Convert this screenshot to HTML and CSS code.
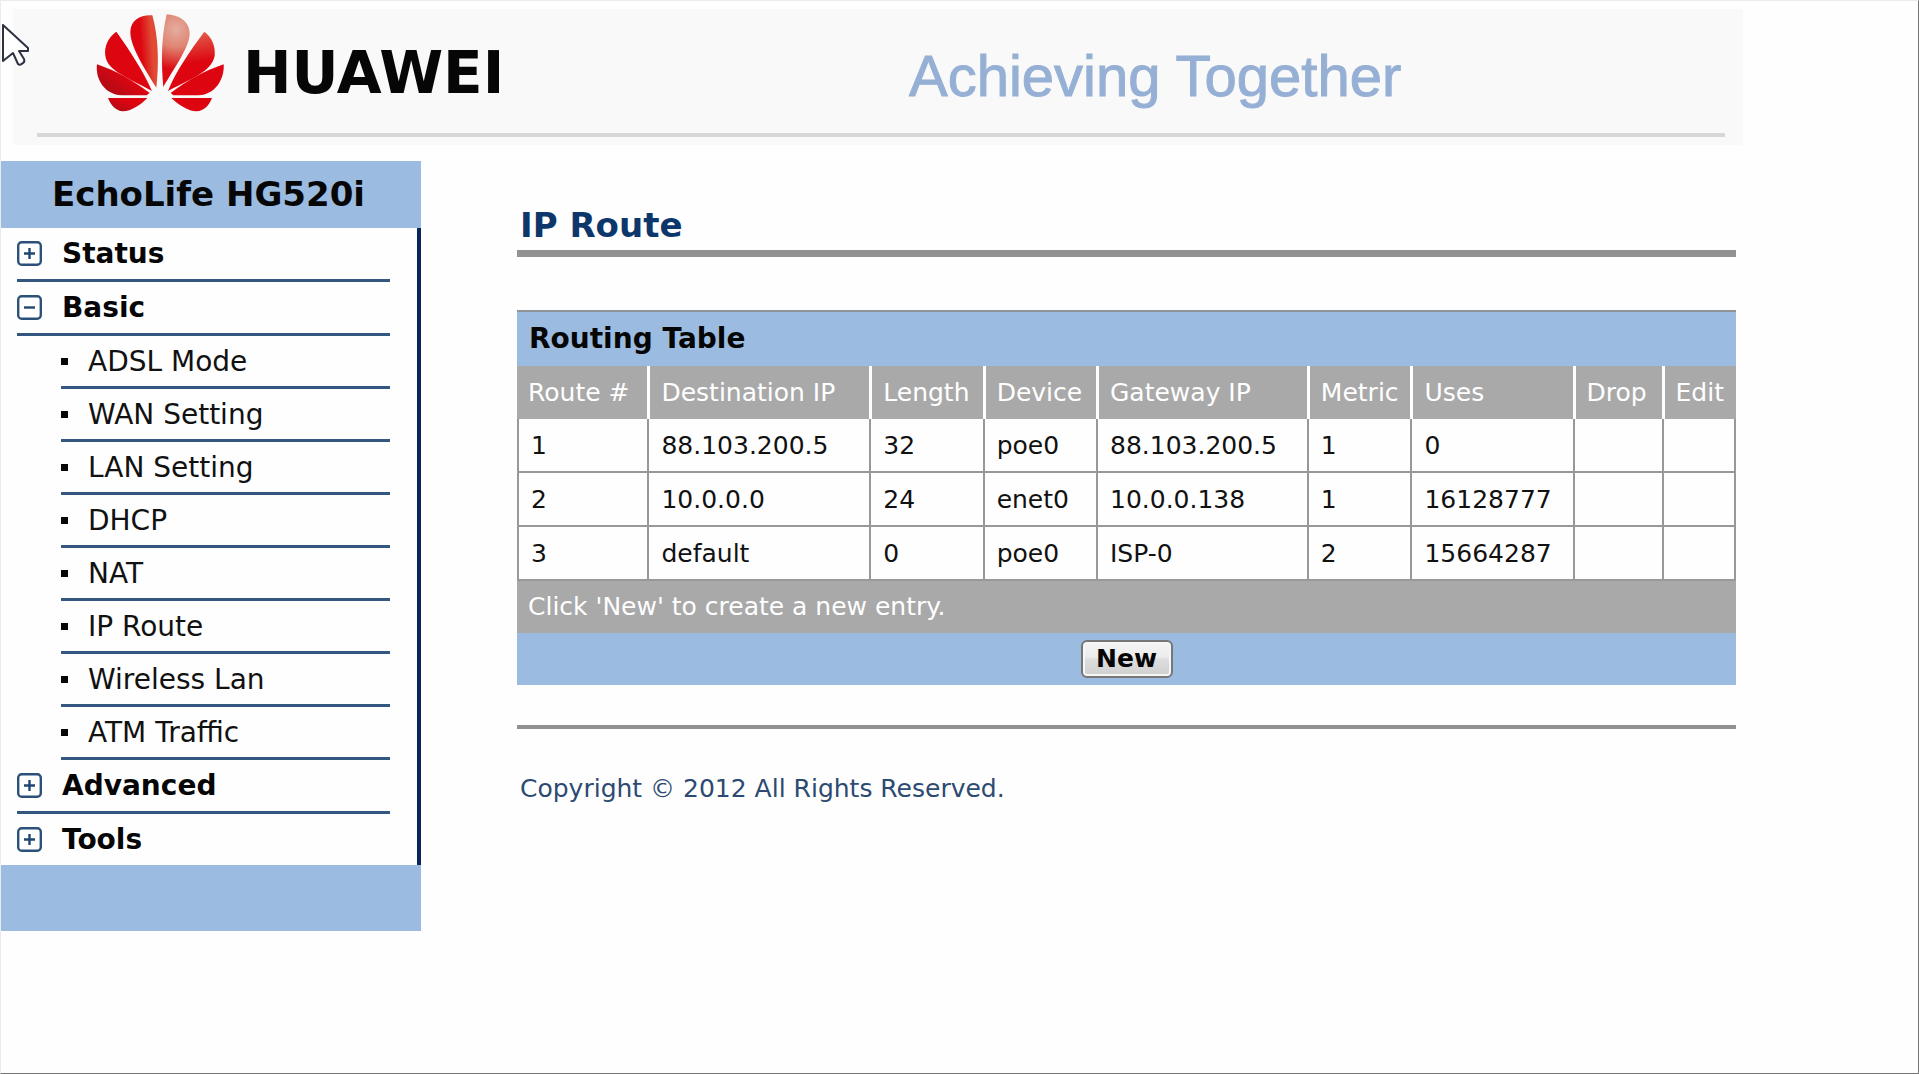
FILE: index.html
```html
<!DOCTYPE html>
<html lang="en">
<head>
<meta charset="utf-8">
<title>EchoLife HG520i - IP Route</title>
<link rel="stylesheet" href="styles.css">
</head>
<body>
<svg width="0" height="0" class="defs" aria-hidden="true">
  <symbol id="plus" viewBox="0 0 25 25">
    <rect x="1.2" y="1.2" width="22.6" height="22.6" rx="3.5" fill="#fff" stroke="#2b5079" stroke-width="2.4"/>
    <path d="M7 12.5H18M12.5 7V18" fill="none" stroke="#1f4772" stroke-width="2.4"/>
  </symbol>
  <symbol id="minus" viewBox="0 0 25 25">
    <rect x="1.2" y="1.2" width="22.6" height="22.6" rx="3.5" fill="#fff" stroke="#2b5079" stroke-width="2.4"/>
    <path d="M7 12.5H18" fill="none" stroke="#1f4772" stroke-width="2.4"/>
  </symbol>
</svg>

<header class="banner">
  <div class="banner-row">
    <div class="brand">
      <svg class="flower" viewBox="45 36 390 300" aria-hidden="true">
        <defs>
          <radialGradient id="g1" gradientUnits="userSpaceOnUse" cx="288" cy="85" r="120">
            <stop offset="0" stop-color="#e3ada0"/><stop offset=".45" stop-color="#e08572"/><stop offset="1" stop-color="#dc0a12"/>
          </radialGradient>
          <linearGradient id="g2" x1="0" x2="1" y1=".6" y2=".4">
            <stop offset=".4" stop-color="#dc0510"/><stop offset=".8" stop-color="#e04a35"/>
          </linearGradient>
          <linearGradient id="g3" x1=".3" x2=".4" y1="0" y2="1">
            <stop offset="0" stop-color="#e2654f"/><stop offset=".55" stop-color="#dc0510"/>
          </linearGradient>
          <linearGradient id="g4" x1="0" x2=".8" y1=".8" y2=".2">
            <stop offset="0" stop-color="#a80d18"/><stop offset=".7" stop-color="#dc0510"/>
          </linearGradient>
        </defs>
        <path fill="url(#g2)" d="M217 43C185 40 152 55 151 92C150 135 195 205 229 260C237 190 236 110 217 43Z"/>
        <path fill="url(#g1)" d="M260 40C295 42 330 60 329 100C328 140 280 205 250 258C244 190 243 110 260 40Z"/>
        <path fill="#dc0510" d="M109 92C85 108 72 135 76 165C83 212 150 232 216 270C190 210 150 150 109 92Z"/>
        <path fill="url(#g3)" d="M373 92C396 108 407 135 404 165C395 212 330 235 264 270C288 210 330 150 373 92Z"/>
        <path fill="url(#g4)" d="M51 190C45 235 75 282 125 283H200L209 276C160 240 110 210 51 190Z"/>
        <path fill="#dc0510" d="M431 190C434 235 405 282 355 283H280L272 276C320 240 372 210 431 190Z"/>
        <path fill="url(#g4)" d="M84 291H202C185 310 150 332 128 331C108 330 92 312 84 291Z"/>
        <path fill="#dc0510" d="M396 291H274C293 310 328 332 350 331C372 330 388 312 396 291Z"/>
      </svg>
      <span class="wordmark">HUAWEI</span>
    </div>
    <span class="slogan">Achieving Together</span>
  </div>
</header>

<div class="columns">
  <nav class="sidebar">
    <h2 class="model">EchoLife HG520i</h2>
    <ul class="menu">
      <li><a class="group" href="#"><svg class="toggle"><use href="#plus"/></svg>Status</a></li>
      <li><a class="group" href="#"><svg class="toggle"><use href="#minus"/></svg>Basic</a>
        <ul class="submenu">
          <li><a href="#">ADSL Mode</a></li>
          <li><a href="#">WAN Setting</a></li>
          <li><a href="#">LAN Setting</a></li>
          <li><a href="#">DHCP</a></li>
          <li><a href="#">NAT</a></li>
          <li><a href="#">IP Route</a></li>
          <li><a href="#">Wireless Lan</a></li>
          <li><a href="#">ATM Traffic</a></li>
        </ul>
      </li>
      <li><a class="group" href="#"><svg class="toggle"><use href="#plus"/></svg>Advanced</a></li>
      <li><a class="group last" href="#"><svg class="toggle"><use href="#plus"/></svg>Tools</a></li>
    </ul>
    <div class="sidebar-foot"></div>
  </nav>

  <main class="content">
    <h1>IP Route</h1>
    <table class="routes">
      <caption>Routing Table</caption>
      <colgroup>
        <col class="c-route"><col class="c-dest"><col class="c-short"><col class="c-short"><col class="c-gate"><col class="c-metric"><col class="c-uses"><col class="c-drop"><col>
      </colgroup>
      <thead>
        <tr><th>Route #</th><th>Destination IP</th><th>Length</th><th>Device</th><th>Gateway IP</th><th>Metric</th><th>Uses</th><th>Drop</th><th>Edit</th></tr>
      </thead>
      <tbody>
        <tr><td>1</td><td>88.103.200.5</td><td>32</td><td>poe0</td><td>88.103.200.5</td><td>1</td><td>0</td><td></td><td></td></tr>
        <tr><td>2</td><td>10.0.0.0</td><td>24</td><td>enet0</td><td>10.0.0.138</td><td>1</td><td>16128777</td><td></td><td></td></tr>
        <tr><td>3</td><td>default</td><td>0</td><td>poe0</td><td>ISP-0</td><td>2</td><td>15664287</td><td></td><td></td></tr>
      </tbody>
    </table>
    <p class="hint">Click 'New' to create a new entry.</p>
    <div class="actions"><button type="button">New</button></div>
    <footer>Copyright © 2012 All Rights Reserved.</footer>
  </main>
</div>

<svg class="pointer" viewBox="0 0 30 48" aria-hidden="true">
  <path d="M2 3V39L12 31L17 42Q19 44 22 41Q24 40 23 37L18 29H27V26Z" fill="#fff" stroke="#2d3142" stroke-width="2" stroke-linejoin="round"/>
</svg>
</body>
</html>
```
FILE: styles.css
```css
* {
  box-sizing: border-box;
}

body {
  position: relative;
  min-height: 100vh;
  margin: 0;
  padding-top: 8px;
  border: 1px solid #ebebeb;
  border-right-color: #777;
  border-bottom-color: #777;
  background: #fefefe;
  color: #111;
  font-family: Verdana, "DejaVu Sans", sans-serif;
  font-size: 25px;
}

h1, h2, ul, p {
  margin: 0;
  padding: 0;
}

ul {
  list-style: none;
}

a {
  color: inherit;
  text-decoration: none;
}

.defs {
  position: absolute;
}

/* Banner */
.banner {
  height: 136px;
  margin: 0 175px 16px 12px;
  padding: 0 18px 8px 24px;
  background: #f9f9f9;
}

.banner-row {
  display: flex;
  align-items: center;
  height: 128px;
  border-bottom: 4px solid #d8d6d6;
}

.brand {
  display: flex;
  flex: 0 0 872px;
  align-items: center;
  gap: 18px;
  padding-left: 58px;
}

.flower {
  width: 130px;
  height: 100px;
  margin-bottom: 16px;
}

.wordmark {
  margin-top: 4px;
  color: #060606;
  font-weight: bold;
  font-size: 58px;
  line-height: 60px;
}

.slogan {
  margin-top: 10px;
  color: #96b0d5;
  font-family: "Liberation Sans", Arial, sans-serif;
  font-size: 58px;
  line-height: 60px;
  white-space: nowrap;
  -webkit-text-stroke: 1px #96b0d5;
}

/* Two-column area */
.columns {
  display: flex;
  align-items: flex-start;
  padding-right: 182px;
}

.sidebar {
  flex: 0 0 421px;
  margin-right: 96px;
  margin-left: -1px;
}

.model {
  height: 67px;
  padding-right: 4px;
  background: #9bbbe1;
  color: #060606;
  font-size: 34px;
  line-height: 67px;
  text-align: center;
}

.menu {
  padding: 0 27px 0 17px;
  border-right: 4px solid #08265a;
  font-size: 28px;
}

.group {
  display: flex;
  align-items: center;
  gap: 20px;
  height: 54px;
  border-bottom: 3px solid #34577f;
  color: #060606;
  font-weight: bold;
}

.last {
  height: 51px;
  border-bottom: 0;
}

.toggle {
  width: 25px;
  height: 25px;
}

.submenu {
  margin-left: 44px;
}

.submenu a {
  display: flex;
  align-items: center;
  gap: 20px;
  height: 53px;
  border-bottom: 3px solid #34577f;
}

.submenu a::before {
  width: 7px;
  height: 7px;
  background: #060606;
  content: "";
}

.sidebar-foot {
  height: 66px;
  background: #9bbbe1;
}

/* Main content */
.content {
  flex: 1;
  min-width: 0;
  padding-top: 44px;
}

h1 {
  margin-bottom: 53px;
  padding: 0 3px 5px;
  border-bottom: 7px solid #929292;
  color: #0d376b;
  font-size: 34px;
  line-height: 40px;
}

.routes {
  width: 100%;
  border-spacing: 0;
  table-layout: fixed;
}

caption {
  height: 56px;
  padding-left: 12px;
  border-top: 2px solid #8f9499;
  background: #9bbbe1;
  color: #060606;
  font-weight: bold;
  font-size: 28px;
  line-height: 54px;
  text-align: left;
}

.c-route { width: 10.7%; }
.c-dest { width: 18.2%; }
.c-short { width: 9.3%; }
.c-gate { width: 17.3%; }
.c-metric { width: 8.5%; }
.c-uses { width: 13.3%; }
.c-drop { width: 7.3%; }

th {
  height: 53px;
  padding: 0 0 0 11px;
  border-left: 3px solid #fff;
  background: #a9a9a9;
  color: #fff;
  font-weight: normal;
  text-align: left;
  white-space: nowrap;
}

th:first-child {
  border-left: 0;
}

td {
  height: 54px;
  padding: 0 0 0 12px;
  border-bottom: 2px solid #989898;
  border-left: 2px solid #989898;
}

td:last-child {
  border-right: 2px solid #989898;
}

.hint {
  padding-left: 11px;
  background: #a9a9a9;
  color: #fff;
  line-height: 52px;
}

.actions {
  display: flex;
  align-items: center;
  justify-content: center;
  height: 52px;
  background: #9bbbe1;
}

button {
  width: 92px;
  height: 38px;
  padding: 0;
  border: 2px solid #777;
  border-radius: 6px;
  background: linear-gradient(#f4f4f4, #ececec 45%, #dedede 50%, #cfcfcf);
  box-shadow: inset 0 0 0 2px #f6f6f6;
  color: #060606;
  font-weight: bold;
  font-size: 25px;
  font-family: inherit;
  line-height: 32px;
}

footer {
  margin-top: 40px;
  padding: 45px 3px 0;
  border-top: 4px solid #919191;
  color: #2c4a72;
  line-height: 30px;
}

.pointer {
  position: absolute;
  top: 21px;
  left: 0;
  width: 30px;
  height: 48px;
}
```
